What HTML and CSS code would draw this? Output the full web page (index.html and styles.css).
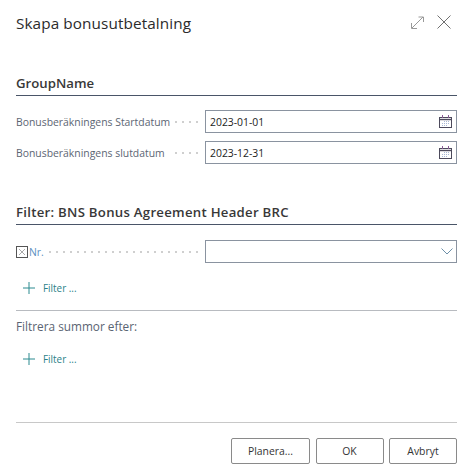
FILE: index.html
```html
<!DOCTYPE html>
<html lang="sv">
<head>
<meta charset="utf-8">
<title>Skapa bonusutbetalning</title>
<link rel="stylesheet" href="styles.css">
</head>
<body>
<main class="dialog">
  <header class="titlebar">
    <h1 class="title">Skapa bonusutbetalning</h1>
    <div class="window-actions">
      <svg width="13" height="13" viewBox="0 0 13 13" fill="none" stroke="#999" stroke-width="1"><path d="M1 12 12 1M7.500 1h5v5M.5 7v5.500H6"/></svg>
      <svg width="14" height="14" viewBox="0 0 14 14" fill="none" stroke="#707070" stroke-width="1"><path d="M.5.5l13 13M13.500.5l-13 13"/></svg>
    </div>
  </header>

  <section class="group group-first">
    <h2 class="group-title">GroupName</h2>
    <div class="field">
      <label class="label"><span>Bonusberäkningens Startdatum</span><i class="dots dots-short"></i></label>
      <div class="input"><span>2023-01-01</span>
        <svg class="cal" width="14" height="14" viewBox="0 0 14 14"><rect x=".5" y="2.500" width="12" height="10" fill="#fff" stroke="#4d4a5c"/><path d="M.5 4.500h12" stroke="#4d4a5c" stroke-width="1.400"/><path d="M3.500 0v3M9.500 0v3" stroke="#8a5a96"/><path d="M5 6.500h6M3 8.500h8M3 10.500h6" stroke="#a9b8d6" stroke-dasharray="1 1"/></svg>
      </div>
    </div>
    <div class="field">
      <label class="label"><span>Bonusberäkningens slutdatum</span><i class="dots dots-short"></i></label>
      <div class="input"><span>2023-12-31</span>
        <svg class="cal" width="14" height="14" viewBox="0 0 14 14"><rect x=".5" y="2.500" width="12" height="10" fill="#fff" stroke="#4d4a5c"/><path d="M.5 4.500h12" stroke="#4d4a5c" stroke-width="1.400"/><path d="M3.500 0v3M9.500 0v3" stroke="#8a5a96"/><path d="M5 6.500h6M3 8.500h8M3 10.500h6" stroke="#a9b8d6" stroke-dasharray="1 1"/></svg>
      </div>
    </div>
  </section>

  <section class="group group-filter">
    <h2 class="group-title group-title-long">Filter: BNS Bonus Agreement Header BRC</h2>
    <div class="field field-filter">
      <label class="label">
        <svg class="remove" width="12" height="12" viewBox="0 0 12 12" fill="none"><rect x=".5" y=".5" width="11" height="11" stroke="#555"/><path d="M3 3l6 6M9 3 3 9" stroke="#aaa"/></svg>
        <span class="nr">Nr.</span><i class="dots"></i>
      </label>
      <div class="input">
        <svg class="chev" width="12" height="7" viewBox="0 0 12 7" fill="none" stroke="#6d8fa8"><path d="M.5.5 6 6 11.500.5"/></svg>
      </div>
    </div>
    <a class="add-filter"><svg width="12" height="12" viewBox="0 0 12 12" stroke="#2a8a8f"><path d="M6 0v12M0 6h12"/></svg><span>Filter ...</span></a>
    <hr class="rule">
    <p class="subhead">Filtrera summor efter:</p>
    <a class="add-filter add-filter-second"><svg width="12" height="12" viewBox="0 0 12 12" stroke="#2a8a8f"><path d="M6 0v12M0 6h12"/></svg><span>Filter ...</span></a>
  </section>

  <footer class="footer">
    <div class="buttons">
      <button class="btn btn-plan">Planera...</button>
      <button class="btn btn-ok">OK</button>
      <button class="btn btn-cancel">Avbryt</button>
    </div>
  </footer>
</main>
</body>
</html>
```
FILE: styles.css
```css
* { box-sizing: border-box; }
html, body { margin: 0; background: #fff; }
body { font-family: "Open Sans", "Noto Sans", "Liberation Sans", sans-serif; color: #333; }
.dialog { width: 471px; height: 476px; padding: 0 14px 0 16px; display: flex; flex-direction: column; }
.titlebar { height: 49px; display: flex; align-items: center; justify-content: space-between; }
.title { margin: 0; padding-bottom: 3px; font-size: 15.3px; font-weight: 500; color: #2b2b2b; letter-spacing: .1px; }
.window-actions { display: flex; align-items: center; gap: 13px; padding-right: 6px; padding-bottom: 5px; }
.group-first { margin-top: 24px; }
.group-filter { margin-top: 30px; }
.group-title { margin: 0 0 14px; height: 23px; line-height: 20px; font-size: 13.2px; font-weight: 600; color: #383838; border-bottom: 1px solid #4a5568; }
.group-title-long { letter-spacing: .27px; }
.field { display: flex; align-items: center; height: 23px; margin-bottom: 8px; }
.label { width: 189px; display: flex; align-items: center; font-size: 10.4px; color: #5c6573; flex: none; white-space: nowrap; overflow: hidden; }
.dots { flex: 1; margin: 1px 6px 0 5px; height: 2px; background-image: radial-gradient(circle at 1px 1px, #cfcfcf 1px, transparent 1px); background-size: 7px 2px; background-repeat: repeat-x; }
.dots-short { flex: none; width: 24px; margin-left: auto; }
.input { flex: 1; height: 23px; border: 1px solid #8a93a0; display: flex; align-items: center; justify-content: space-between; padding: 0 3px 0 4px; font-size: 10.4px; color: #222; }
.field-filter { margin-top: 15px; margin-bottom: 0; }
.field-filter .input { justify-content: flex-end; }
.remove { flex: none; margin-right: 1px; }
.nr { color: #5a8fbf; }
.add-filter { display: flex; align-items: center; gap: 8px; margin: 17px 0 0 7px; height: 15px; font-size: 9.9px; color: #2a8288; }
.rule { margin: 15px 0 0; border: 0; border-top: 1px solid #b8bbc0; }
.subhead { margin: 8px 0 0; font-size: 11.8px; line-height: 15px; color: #5a6472; }
.add-filter-second { margin-top: 17px; }
.footer { margin-top: auto; height: 54px; border-top: 1px solid #c8c8c8; padding-top: 15px; }
.buttons { display: flex; justify-content: flex-end; gap: 5.5px; }
.btn { height: 26px; padding: 0; background: #fff; border: 1px solid #8a8a8a; border-radius: 2px; font: 400 10.4px "Open Sans", "Noto Sans", sans-serif; color: #333; }
.btn-plan { width: 79px; }
.btn-ok, .btn-cancel { width: 68px; }
```
